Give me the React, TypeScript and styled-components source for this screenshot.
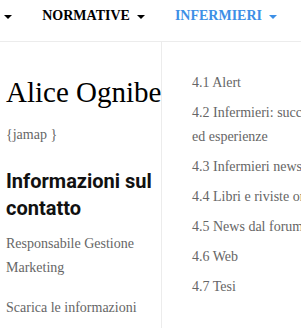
import React from 'react';
import styled, { createGlobalStyle } from 'styled-components';

const GlobalStyle = createGlobalStyle`
  html, body {
    margin: 0;
    padding: 0;
    background: #fff;
    overflow: hidden;
  }
  body {
    font-family: "Liberation Serif", "Times New Roman", serif;
    color: #000;
  }
`;

const Page = styled.div`
  display: flex;
  flex-direction: column;
  width: 301px;
  height: 328px;
  overflow: hidden;
`;

const Nav = styled.nav`
  display: flex;
  justify-content: flex-end;
  align-items: flex-start;
  height: 41px;
  padding-right: 9px;
  border-bottom: 1px solid #ececec;
  overflow: hidden;
  flex-shrink: 0;
`;

const NavItem = styled.a<{ $active?: boolean }>`
  display: flex;
  align-items: center;
  flex-shrink: 0;
  padding: 6px 15px 0;
  line-height: 20px;
  font-size: 14px;
  font-weight: bold;
  text-transform: uppercase;
  white-space: nowrap;
  color: ${(p) => (p.$active ? '#3d8fe6' : '#000')};
  text-decoration: none;
`;

const Caret = styled.span`
  display: inline-block;
  margin-left: 7px;
  margin-top: 1px;
  width: 0;
  height: 0;
  border-top: 4px solid currentColor;
  border-left: 4px solid transparent;
  border-right: 4px solid transparent;
`;

const Main = styled.div`
  display: grid;
  grid-template-columns: 161px 175px;
  flex: 1;
`;

const Profile = styled.section`
  overflow: hidden;
  padding: 34px 0 0 6px;
`;

const Name = styled.h1`
  margin: 0;
  font-size: 29px;
  line-height: 32px;
  font-weight: normal;
  white-space: nowrap;
`;

const Muted = styled.p<{ $gap?: number }>`
  margin: ${(p) => p.$gap ?? 0}px 0 0;
  font-size: 14px;
  line-height: 24px;
  color: #666;
`;

const SectionTitle = styled.h2`
  margin: 21px 0 0;
  font-family: Roboto, "Liberation Sans", sans-serif;
  font-size: 20px;
  line-height: 27px;
  font-weight: bold;
  color: #111;
`;

const Sidebar = styled.aside`
  border-left: 1px solid #ececec;
  padding: 29px 0 0 30px;
`;

const Menu = styled.ul`
  list-style: none;
  margin: 0;
  padding: 0;
  width: 144px;
  display: flex;
  flex-direction: column;
  gap: 6px;
`;

const MenuItem = styled.li`
  font-size: 14px;
  line-height: 24px;
  color: #666;
`;

const navItems = [
  { label: 'Chi siamo' },
  { label: 'Normative' },
  { label: 'Infermieri', active: true },
];

const links = [
  '4.1 Alert',
  '4.2 Infermieri: successi ed esperienze',
  '4.3 Infermieri news',
  '4.4 Libri e riviste online',
  '4.5 News dal forum',
  '4.6 Web',
  '4.7 Tesi',
];

export default function App() {
  return (
    <>
      <GlobalStyle />
      <Page>
        <Nav>
          {navItems.map((item) => (
            <NavItem key={item.label} href="#" $active={item.active}>
              {item.label}
              <Caret />
            </NavItem>
          ))}
        </Nav>
        <Main>
          <Profile>
            <Name>Alice Ognibene</Name>
            <Muted $gap={15}>{'{jamap }'}</Muted>
            <SectionTitle>Informazioni sul contatto</SectionTitle>
            <Muted $gap={10}>Responsabile Gestione Marketing</Muted>
            <Muted $gap={16}>Scarica le informazioni</Muted>
          </Profile>
          <Sidebar>
            <Menu>
              {links.map((l) => (
                <MenuItem key={l}>{l}</MenuItem>
              ))}
            </Menu>
          </Sidebar>
        </Main>
      </Page>
    </>
  );
}
